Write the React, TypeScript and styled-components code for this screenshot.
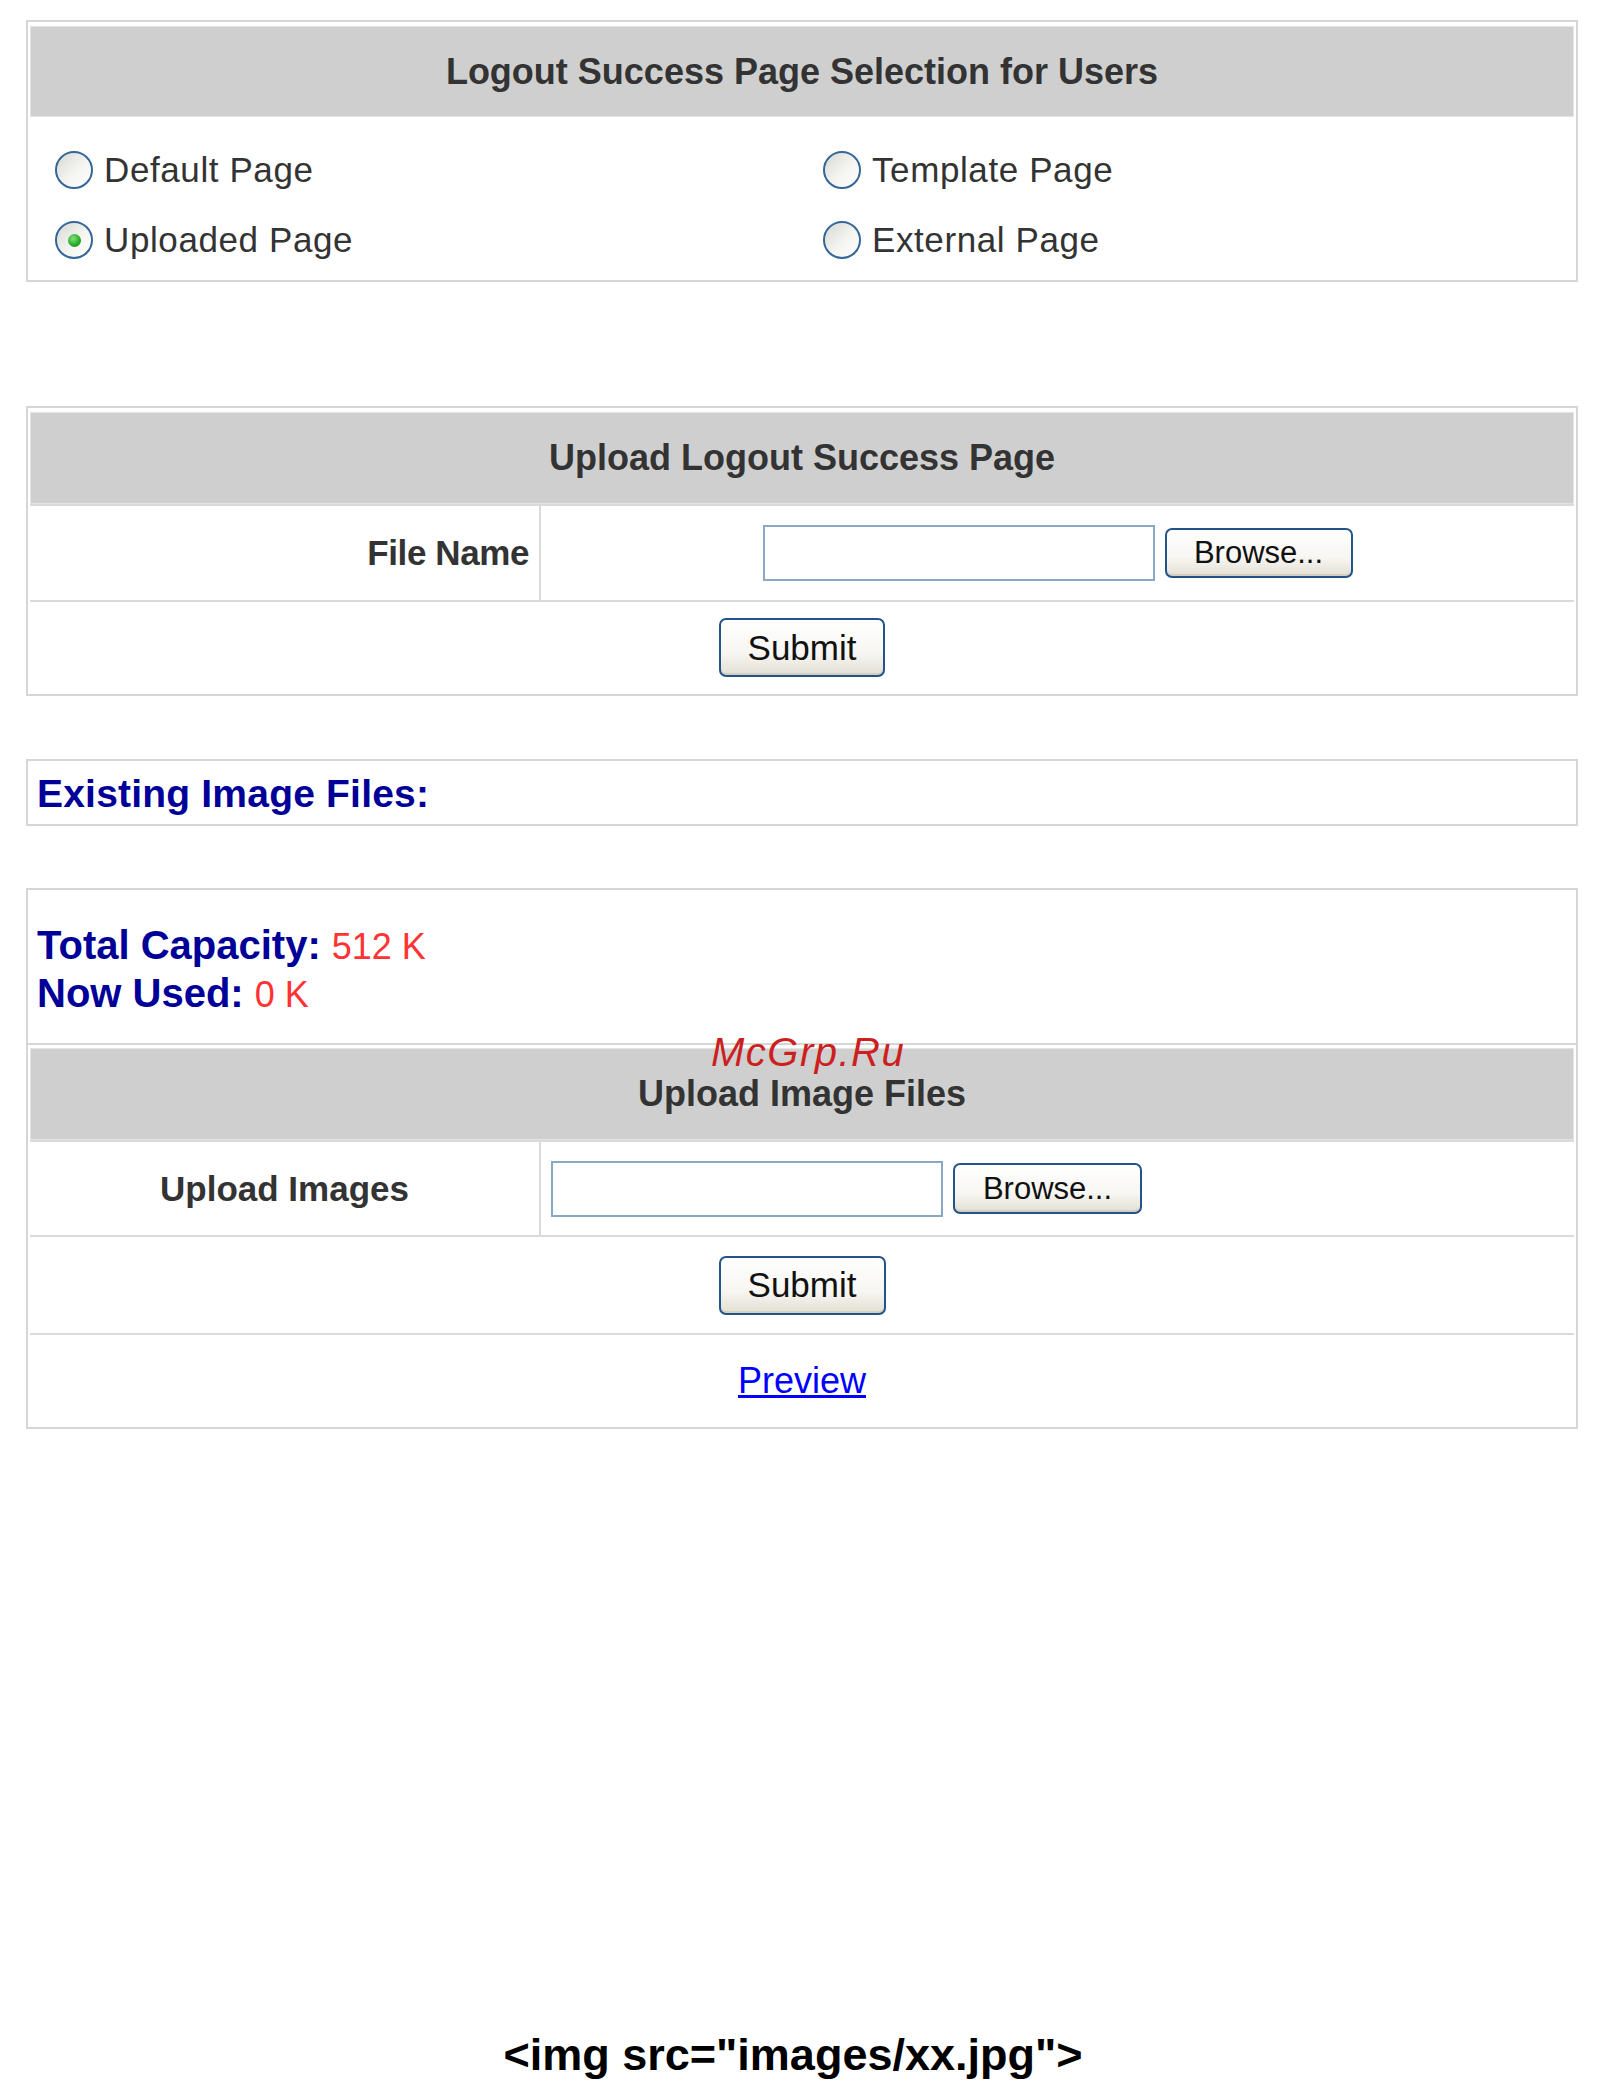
import styled, { createGlobalStyle } from "styled-components";
import { useState } from "react";

const GlobalStyle = createGlobalStyle`
  html, body {
    margin: 0;
    padding: 0;
    background: #ffffff;
  }
  body {
    font-family: "Liberation Sans", Arial, sans-serif;
  }
`;

const Page = styled.div`
  width: 1606px;
  box-sizing: border-box;
  padding: 20px 28px 0 26px;
  display: flex;
  flex-direction: column;
`;

const Panel = styled.div<{ $mt?: number }>`
  position: relative;
  margin-top: ${({ $mt }) => $mt || 0}px;
  border: 2px solid #d6d6d6;
  padding: 4px 2px 1px;
  background: #ffffff;
`;

const Header = styled.div<{ $h?: number }>`
  height: ${({ $h }) => $h || 91}px;
  box-sizing: border-box;
  display: flex;
  align-items: center;
  justify-content: center;
  background: #cfcfcf;
  border: 1px solid #e4e4e4;
  color: #333333;
  font-weight: bold;
  font-size: 36px;
`;

const RadioGrid = styled.div`
  display: grid;
  grid-template-columns: 1fr 1fr;
  grid-auto-rows: 70px;
  padding: 18px 0 4px;
`;

const RadioOption = styled.label`
  display: flex;
  align-items: center;
  gap: 11px;
  padding-left: 25px;
  color: #333333;
  font-size: 35px;
  letter-spacing: 0.6px;
  cursor: pointer;

  &:nth-child(even) {
    padding-left: 21px;
  }
`;

const RadioDot = styled.span<{ $checked: boolean }>`
  position: relative;
  width: 38px;
  height: 38px;
  box-sizing: border-box;
  border-radius: 50%;
  border: 2px solid #35679a;
  background: linear-gradient(135deg, #d9d9d3 0%, #f4f4f1 55%, #ffffff 100%);
  flex-shrink: 0;

  &::after {
    content: "";
    display: ${({ $checked }) => ($checked ? "block" : "none")};
    position: absolute;
    left: 50%;
    top: 50%;
    width: 13px;
    height: 13px;
    margin: -6.5px 0 0 -6.5px;
    border-radius: 50%;
    background: radial-gradient(circle at 40% 35%, #7fe07f 0%, #23a823 60%, #1b8a1b 100%);
  }
`;

const Row = styled.div<{ $h: number; $split?: boolean }>`
  display: grid;
  grid-template-columns: ${({ $split }) => ($split ? "511px 1fr" : "1fr")};
  min-height: ${({ $h }) => $h}px;
  border-top: 2px solid #dadada;
`;

const LabelCell = styled.div<{ $align: "right" | "center" }>`
  display: flex;
  align-items: center;
  justify-content: ${({ $align }) => ($align === "right" ? "flex-end" : "center")};
  padding-right: ${({ $align }) => ($align === "right" ? "10px" : "0")};
  border-right: 2px solid #dadada;
  color: #333333;
  font-weight: bold;
  font-size: 35px;
  letter-spacing: ${({ $align }) => ($align === "right" ? "-0.4px" : "0")};
`;

const FieldCell = styled.div<{ $align: "center" | "left" }>`
  display: flex;
  align-items: center;
  justify-content: ${({ $align }) => ($align === "center" ? "center" : "flex-start")};
  gap: 10px;
  padding-left: ${({ $align }) => ($align === "left" ? "10px" : "0")};
`;

const CenterCell = styled.div`
  display: flex;
  align-items: center;
  justify-content: center;
`;

const FileBox = styled.input`
  width: 392px;
  height: 56px;
  box-sizing: border-box;
  border: 2px solid #8aa7c6;
  background: #ffffff;
  font-size: 28px;
  padding: 0 6px;
  outline: none;
`;

const XpButton = styled.button<{ $w: number; $h: number; $size: number }>`
  width: ${({ $w }) => $w}px;
  height: ${({ $h }) => $h}px;
  box-sizing: border-box;
  border: 2px solid #22548a;
  border-radius: 7px;
  background: linear-gradient(180deg, #ffffff 0%, #f7f6f2 60%, #e3dfd4 100%);
  box-shadow: inset 0 -2px 0 #d4cfc2;
  color: #111111;
  font-family: "Liberation Sans", Arial, sans-serif;
  font-size: ${({ $size }) => $size}px;
  padding: 0;
  cursor: pointer;
`;

const SectionTitle = styled.div`
  height: 58px;
  display: flex;
  align-items: center;
  padding-left: 7px;
  color: #000099;
  font-weight: bold;
  font-size: 39px;
  letter-spacing: 0.2px;
`;

const InfoBlock = styled.div`
  padding: 31px 9px 26px;
  border-bottom: 2px solid #d6d6d6;
  margin: -4px -2px 3px;
`;

const InfoLine = styled.div`
  height: 48px;
  line-height: 48px;
  white-space: nowrap;
`;

const InfoLabel = styled.span`
  color: #000099;
  font-weight: bold;
  font-size: 40px;
`;

const InfoValue = styled.span`
  color: #ff3333;
  font-size: 36px;
  margin-left: 11px;
`;

const PreviewLink = styled.a`
  color: #0000ff;
  font-size: 36px;
  text-decoration: underline;
`;

const Watermark = styled.div`
  position: absolute;
  left: 683px;
  top: 142px;
  color: #cc1f1f;
  font-style: italic;
  font-size: 40px;
  letter-spacing: 1.5px;
  line-height: 1;
  pointer-events: none;
`;

const CodeLine = styled.div`
  margin-top: 599px;
  padding-right: 18px;
  text-align: center;
  color: #000000;
  font-weight: bold;
  font-size: 45px;
  line-height: 54px;
`;

const options = [
  { id: "default", label: "Default Page" },
  { id: "template", label: "Template Page" },
  { id: "uploaded", label: "Uploaded Page" },
  { id: "external", label: "External Page" },
];

export default function App() {
  const [page, setPage] = useState("uploaded");

  return (
    <Page>
      <GlobalStyle />

      <Panel>
        <Header>Logout Success Page Selection for Users</Header>
        <RadioGrid>
          {options.map((opt) => (
            <RadioOption key={opt.id} onClick={() => setPage(opt.id)}>
              <RadioDot $checked={page === opt.id} />
              {opt.label}
            </RadioOption>
          ))}
        </RadioGrid>
      </Panel>

      <Panel $mt={124}>
        <Header $h={92}>Upload Logout Success Page</Header>
        <Row $h={94} $split>
          <LabelCell $align="right">File Name</LabelCell>
          <FieldCell $align="center">
            <FileBox type="text" readOnly />
            <XpButton $w={188} $h={50} $size={31}>
              Browse...
            </XpButton>
          </FieldCell>
        </Row>
        <Row $h={91}>
          <CenterCell>
            <XpButton $w={166} $h={59} $size={35}>
              Submit
            </XpButton>
          </CenterCell>
        </Row>
      </Panel>

      <Panel $mt={63}>
        <SectionTitle>Existing Image Files:</SectionTitle>
      </Panel>

      <Panel $mt={62}>
        <InfoBlock>
          <InfoLine>
            <InfoLabel>Total Capacity:</InfoLabel>
            <InfoValue>512 K</InfoValue>
          </InfoLine>
          <InfoLine>
            <InfoLabel>Now Used:</InfoLabel>
            <InfoValue>0 K</InfoValue>
          </InfoLine>
        </InfoBlock>
        <Header $h={92}>Upload Image Files</Header>
        <Row $h={93} $split>
          <LabelCell $align="center">Upload Images</LabelCell>
          <FieldCell $align="left">
            <FileBox type="text" readOnly />
            <XpButton $w={189} $h={51} $size={31}>
              Browse...
            </XpButton>
          </FieldCell>
        </Row>
        <Row $h={96}>
          <CenterCell>
            <XpButton $w={167} $h={59} $size={35}>
              Submit
            </XpButton>
          </CenterCell>
        </Row>
        <Row $h={91}>
          <CenterCell>
            <PreviewLink href="#">Preview</PreviewLink>
          </CenterCell>
        </Row>
        <Watermark>McGrp.Ru</Watermark>
      </Panel>

      <CodeLine>{'<img src="images/xx.jpg">'}</CodeLine>
    </Page>
  );
}
